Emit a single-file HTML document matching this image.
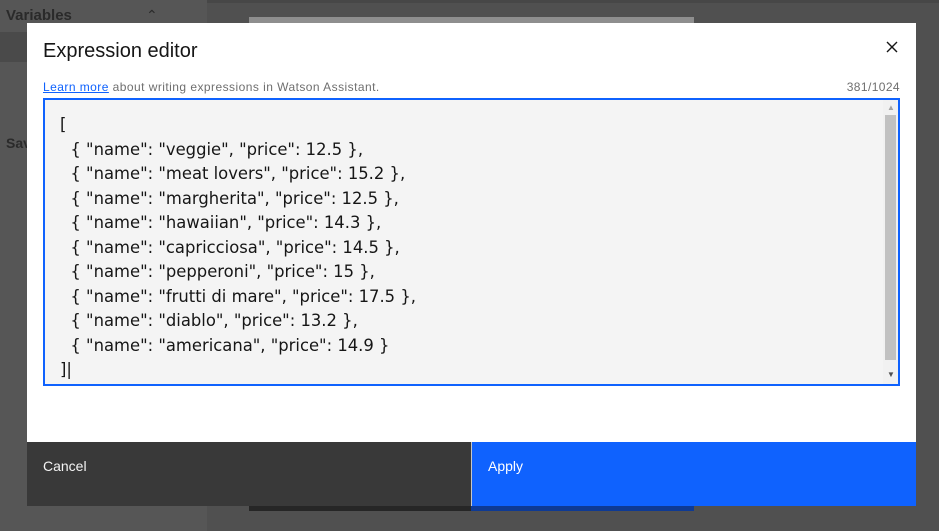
<!DOCTYPE html>
<html><head><style>
*{box-sizing:border-box;margin:0;padding:0}
body{width:939px;height:531px;position:relative;overflow:hidden;background:#505050;font-family:"Liberation Sans",sans-serif}
.side{position:absolute;left:0;top:0;width:207px;height:531px;background:#565656}
.abs{position:absolute}
.modal{position:absolute;left:27px;top:23px;width:889px;height:483px;background:#fff}
.ta{position:absolute;left:16px;top:75px;width:857px;height:288px;border:2px solid #0f62fe;background:#f4f4f4}
pre{position:absolute;left:15px;top:13px;font-family:"DejaVu Sans","Liberation Sans",sans-serif;font-size:16.4px;line-height:24.5px;color:#161616;letter-spacing:0}
</style></head><body>
<div class="side"></div>
<div class="abs" style="left:0;top:32px;width:207px;height:30px;background:#4a4a4a"></div>
<div class="abs" style="left:6px;top:7px;font-size:15px;font-weight:bold;color:#2a2a2a">Variables</div>
<div class="abs" style="left:146px;top:7px;font-size:14px;color:#2a2a2a">&#8963;</div>
<div class="abs" style="left:6px;top:135px;font-size:14px;font-weight:bold;color:#2a2a2a">Sav</div>
<div class="abs" style="left:207px;top:0;width:732px;height:3px;background:#474747"></div>
<div class="abs" style="left:249px;top:17px;width:445px;height:6px;background:#8e8e8e"></div>
<div class="abs" style="left:249px;top:506px;width:222px;height:5px;background:#262626"></div>
<div class="abs" style="left:471px;top:506px;width:223px;height:5px;background:#0e3a94"></div>
<div class="modal">
 <div class="abs" style="left:16px;top:17px;font-size:20px;color:#161616">Expression editor</div>
 <svg class="abs" style="left:859px;top:18px" width="12" height="12"><path d="M1 1L11 11M11 1L1 11" stroke="#161616" stroke-width="1.4"/></svg>
 <div class="abs" style="left:16px;top:57px;font-size:12px;color:#6f6f6f;letter-spacing:0.45px"><span style="color:#0f62fe;text-decoration:underline">Learn more</span> about writing expressions in Watson Assistant.</div>
 <div class="abs" style="right:16px;top:57px;font-size:12px;color:#6f6f6f;letter-spacing:0.4px">381/1024</div>
 <div class="ta">
<pre>[
  { "name": "veggie", "price": 12.5 },
  { "name": "meat lovers", "price": 15.2 },
  { "name": "margherita", "price": 12.5 },
  { "name": "hawaiian", "price": 14.3 },
  { "name": "capricciosa", "price": 14.5 },
  { "name": "pepperoni", "price": 15 },
  { "name": "frutti di mare", "price": 17.5 },
  { "name": "diablo", "price": 13.2 },
  { "name": "americana", "price": 14.9 }
]|</pre>
  <div class="abs" style="left:838px;top:0;width:15px;height:284px;background:#f1f1f1"></div>
  <div class="abs" style="left:840px;top:15px;width:11px;height:245px;background:#c1c1c1"></div>
  <div class="abs" style="left:842px;top:3px;font-size:8px;color:#a3a3a3">&#9650;</div>
  <div class="abs" style="left:842px;top:270px;font-size:8px;color:#505050">&#9660;</div>
 </div>
 <div class="abs" style="left:0;top:419px;width:444px;height:64px;background:#393939;color:#f4f4f4;font-size:14px;padding:16px 16px">Cancel</div>
 <div class="abs" style="left:444px;top:419px;width:445px;height:64px;background:#0f62fe;color:#fff;font-size:14px;padding:16px 16px;border-left:1px solid #c6c6c6">Apply</div>
</div>
</body></html>
